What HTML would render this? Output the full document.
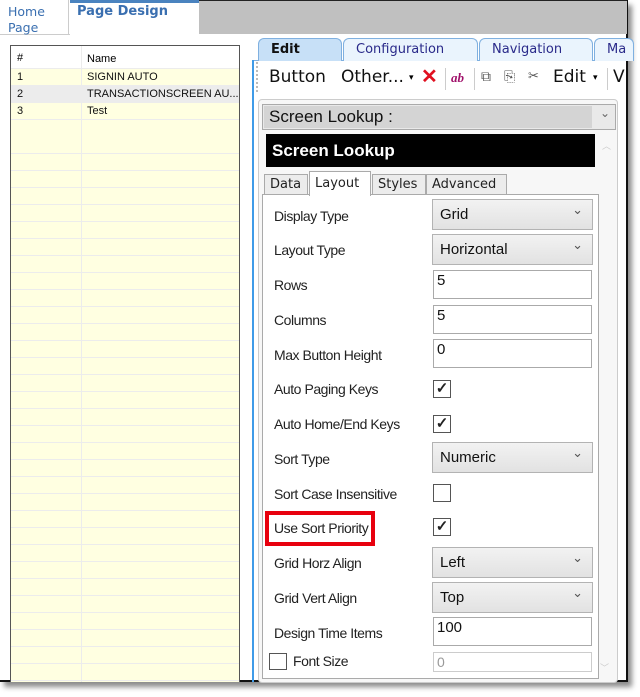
<!DOCTYPE html>
<html><head><meta charset="utf-8"><style>
*{box-sizing:border-box;margin:0;padding:0}
body{width:640px;height:697px;background:#fff;position:relative;overflow:hidden;font-family:"Liberation Sans",Arial,sans-serif}
.a{position:absolute}
.frame{left:0;top:0;width:628px;height:682px;border-right:2px solid #111;border-bottom:2px solid #111;box-shadow:4px 5px 5px rgba(0,0,0,.45);background:#fff}
.tabtxt{font-family:"DejaVu Sans",sans-serif;font-size:12.5px;color:#3a6fb0}
.row{position:absolute;left:0;width:228px;height:17px;border-bottom:1px solid #ececec;font-size:11px;color:#111;line-height:17px}
.row span{position:absolute;left:6px}
.row b{font-weight:normal;position:absolute;left:76px}
.lbl{position:absolute;left:274px;font-size:14px;color:#222;letter-spacing:-0.45px}
.sel{position:absolute;left:432px;width:161px;height:31px;background:linear-gradient(#f2f2f2,#e2e2e2);border:1px solid #b3b3b3;font-size:15px;color:#111;padding:6px 0 0 7px}
.sel:after{content:"⌄";position:absolute;right:9px;top:2px;font-size:13px;color:#555}
.inp{position:absolute;left:433px;width:159px;height:29px;border:1px solid #aaa;background:#fff;font-size:15px;color:#111;padding:1px 0 0 3px}
.cb{position:absolute;left:433px;width:18px;height:18px;border:1px solid #555;background:#fff;font-size:15px;line-height:16px;text-align:center;color:#222;font-weight:bold}
.tb{position:absolute;top:38px;height:23px;border:1px solid #7fb0e0;border-bottom:none;background:#eaf4fd;font-family:"DejaVu Sans",sans-serif;font-size:13px;color:#2a2a8a;padding:3px 0 0 12px;border-radius:6px 6px 0 0}
.itab{position:absolute;top:174px;height:21px;border:1px solid #aaa;background:#ececec;font-family:"DejaVu Sans",sans-serif;font-size:13px;color:#222;padding:2px 0 0 5px}
</style></head><body>
<div class="a frame"></div>
<div class="a" style="left:199px;top:0;width:428px;height:34px;background:#c0c0c0;border-top:1px solid #222"></div>
<div class="a" style="left:0;top:34px;width:70px;height:1px;background:#ccc"></div>
<div class="a" style="left:68px;top:0;width:1px;height:34px;background:#ccc"></div>
<div class="a tabtxt" style="left:8px;top:4px;line-height:16px">Home<br>Page</div>
<div class="a" style="left:70px;top:0;width:129px;height:3px;background:#4a83bf"></div>
<div class="a tabtxt" style="left:77px;top:4px;font-weight:bold;font-size:13px">Page Design</div>
<div class="a" style="left:10px;top:45px;width:230px;height:637px;border:1px solid #555;border-bottom:none;background:#ffffe1;overflow:hidden">
 <div class="a" style="left:0;top:0;width:230px;height:23px;background:#fff;border-bottom:1px solid #ececec"></div>
 <div class="a" style="left:0;top:91px;width:230px;height:560px;background:repeating-linear-gradient(#ffffe1 0 16px,#ececec 16px 17px)"></div>
 <div style="position:absolute;left:0;top:23px;width:230px">
  <div class="row" style="top:0"><span>1</span><b>SIGNIN AUTO</b></div>
  <div class="row" style="top:17px;background:#ececec"><span>2</span><b>TRANSACTIONSCREEN AU...</b></div>
  <div class="row" style="top:34px"><span>3</span><b>Test</b></div>
 </div>
 <div class="a" style="left:70px;top:0;width:1px;height:640px;background:#ececec"></div>
 <div class="a" style="left:6px;top:6px;font-size:11px">#</div>
 <div class="a" style="left:76px;top:7px;font-size:11px">Name</div>
</div>
<div class="a" style="left:252px;top:60px;width:2px;height:622px;background:#3f9be8"></div>
<div class="a" style="left:254px;top:60px;width:371px;height:1px;background:#7fb0e0"></div>
<div class="tb" style="left:258px;width:84px;background:#c7e0f7;font-weight:bold;color:#111">Edit</div>
<div class="tb" style="left:343px;width:135px">Configuration</div>
<div class="tb" style="left:479px;width:114px">Navigation</div>
<div class="tb" style="left:594px;width:40px">Ma</div>
<div class="a" style="left:256px;top:62px;width:2px;height:30px;border-left:2px dotted #bbb"></div>
<div class="a" style="left:269px;top:67px;font-family:'DejaVu Sans',sans-serif;font-size:17px;color:#111">Button</div>
<div class="a" style="left:341px;top:67px;font-family:'DejaVu Sans',sans-serif;font-size:17px;color:#111">Other...</div>
<div class="a" style="left:409px;top:72px;font-size:9px">▾</div>
<div class="a" style="left:421px;top:64px;font-size:20px;color:#e01020;font-weight:bold">✕</div>
<div class="a" style="left:445px;top:68px;width:1px;height:22px;background:#ccc"></div>
<div class="a" style="left:451px;top:70px;font-family:'Liberation Serif',serif;font-style:italic;font-weight:bold;font-size:13px;color:#a0106a">ab</div>
<div class="a" style="left:474px;top:68px;width:1px;height:22px;background:#ccc"></div>
<div class="a" style="left:481px;top:68px;font-size:14px;color:#555">⧉</div>
<div class="a" style="left:504px;top:68px;font-size:14px;color:#555">⎘</div>
<div class="a" style="left:528px;top:68px;font-size:13px;color:#555">✂</div>
<div class="a" style="left:553px;top:67px;font-family:'DejaVu Sans',sans-serif;font-size:17px;color:#111">Edit</div>
<div class="a" style="left:593px;top:72px;font-size:9px">▾</div>
<div class="a" style="left:607px;top:68px;width:1px;height:22px;background:#ccc"></div>
<div class="a" style="left:613px;top:67px;font-family:'DejaVu Sans',sans-serif;font-size:17px;color:#111">V</div>
<div class="a" style="left:258px;top:99px;width:360px;height:584px;border:1px solid #ccc;border-radius:4px;background:#f7f7f7"></div>
<div class="a" style="left:262px;top:104px;width:354px;height:26px;border:1px solid #aaa;background:#e9e9e9"></div>
<div class="a" style="left:264px;top:106px;width:328px;height:22px;background:#d4d4d4;font-size:17px;color:#111;padding:1px 0 0 5px">Screen Lookup :</div>
<div class="a" style="left:600px;top:106px;font-size:12px;color:#666">⌄</div>
<div class="a" style="left:266px;top:134px;width:329px;height:33px;background:#000;color:#fff;font-weight:bold;font-size:17px;padding:7px 0 0 6px">Screen Lookup</div>
<div class="a" style="left:602px;top:139px;font-size:9px;color:#ccc">︿</div>
<div class="a" style="left:262px;top:194px;width:337px;height:485px;border:1px solid #aaa;background:#fff"></div>
<div class="itab" style="left:264px;width:44px">Data</div>
<div class="itab" style="left:309px;top:171px;height:25px;width:62px;background:#fff;border-bottom:none;padding-top:4px">Layout</div>
<div class="itab" style="left:372px;width:54px">Styles</div>
<div class="itab" style="left:426px;width:81px">Advanced</div>
<div class="lbl" style="top:208px">Display Type</div><div class="sel" style="top:199px">Grid</div>
<div class="lbl" style="top:242px">Layout Type</div><div class="sel" style="top:234px">Horizontal</div>
<div class="lbl" style="top:277px">Rows</div><div class="inp" style="top:270px">5</div>
<div class="lbl" style="top:312px">Columns</div><div class="inp" style="top:305px">5</div>
<div class="lbl" style="top:347px">Max Button Height</div><div class="inp" style="top:339px">0</div>
<div class="lbl" style="top:381px">Auto Paging Keys</div><div class="cb" style="top:380px">✓</div>
<div class="lbl" style="top:416px">Auto Home/End Keys</div><div class="cb" style="top:415px">✓</div>
<div class="lbl" style="top:451px">Sort Type</div><div class="sel" style="top:442px">Numeric</div>
<div class="lbl" style="top:486px">Sort Case Insensitive</div><div class="cb" style="top:484px"></div>
<div class="a" style="left:265px;top:511px;width:110px;height:35px;border:4px solid #e8000e"></div>
<div class="lbl" style="top:520px">Use Sort Priority</div><div class="cb" style="top:518px">✓</div>
<div class="lbl" style="top:555px">Grid Horz Align</div><div class="sel" style="top:547px">Left</div>
<div class="lbl" style="top:590px">Grid Vert Align</div><div class="sel" style="top:582px">Top</div>
<div class="lbl" style="top:625px">Design Time Items</div><div class="inp" style="top:617px">100</div>
<div class="a" style="left:269px;top:653px;width:18px;height:17px;border:1px solid #555;background:#fff"></div>
<div class="lbl" style="left:293px;top:653px">Font Size</div>
<div class="inp" style="top:652px;height:20px;border-color:#ccc;color:#999;font-size:14px">0</div>
<div class="a" style="left:600px;top:661px;font-size:9px;color:#ccc">﹀</div>
</body></html>
